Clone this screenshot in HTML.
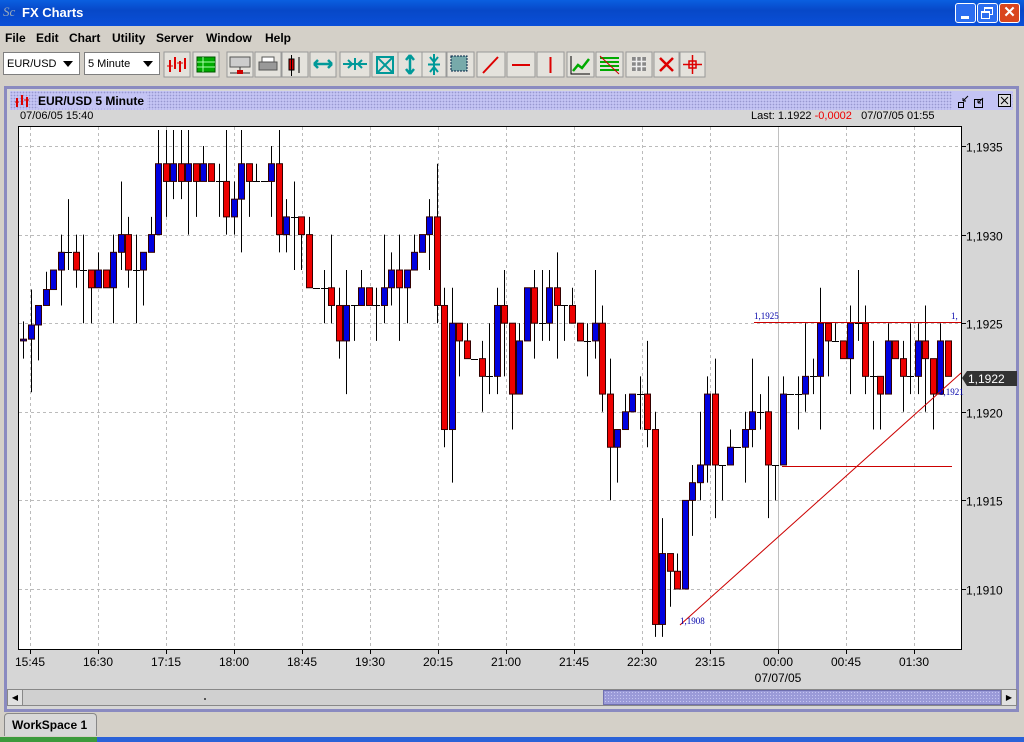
<!DOCTYPE html>
<html><head><meta charset="utf-8">
<style>
*{margin:0;padding:0;box-sizing:border-box}
body{width:1024px;height:742px;overflow:hidden;background:#d4d0c8;font-family:"Liberation Sans",sans-serif;position:relative}
.abs{position:absolute}
#title{left:0;top:0;width:1024px;height:26px;background:linear-gradient(#0a5fe0,#0748c8 40%,#0a4fd8);color:#fff;font-weight:bold;font-size:13px}
#menu{top:26px;left:0;width:1024px;height:23px;font-size:12px;font-weight:bold}
#menu span{position:absolute;top:5px}
.combo{position:absolute;top:52px;height:23px;background:#fff;border:1px solid #7f7f7f;font-size:11px;padding:5px 3px}
.combo:after{content:"";position:absolute;right:6px;top:8px;border:5px solid transparent;border-top:6px solid #000}
#frame{left:4px;top:86px;width:1015px;height:626px;border:3px solid #8a8ac0;background:#d6d6d6}
#ftitle{left:3px;top:2px;width:1003px;height:19px;background-color:#c4c4f4;background-image:radial-gradient(#9898d0 0.7px,transparent 0.9px);background-size:3px 3px;font-size:12px;font-weight:bold}
.sb{border:1px solid #888}
</style></head><body>
<div id="title" class="abs"><span class="abs" style="left:3px;top:4px;font-family:'Liberation Serif',serif;font-style:italic;color:#9ab;font-weight:normal;font-size:13px">Sc</span><span class="abs" style="left:22px;top:5px">FX Charts</span>
<div class="abs" style="left:955px;top:3px;width:21px;height:20px;background:#2b6ef0;border:1px solid #fff;border-radius:3px"><div class="abs" style="left:5px;top:12px;width:8px;height:3px;background:#fff"></div></div>
<div class="abs" style="left:977px;top:3px;width:21px;height:20px;background:#2b6ef0;border:1px solid #fff;border-radius:3px"><div class="abs" style="left:6px;top:3px;width:9px;height:8px;border:1px solid #fff;border-top-width:2px"></div><div class="abs" style="left:3px;top:7px;width:9px;height:8px;border:1px solid #fff;border-top-width:2px;background:#2b6ef0"></div></div>
<div class="abs" style="left:999px;top:3px;width:21px;height:20px;background:#d9461e;border:1px solid #fff;border-radius:3px;text-align:center;font-size:15px;line-height:18px">✕</div>
</div>
<div id="menu" class="abs"><span style="left:5px">File</span><span style="left:36px">Edit</span><span style="left:69px">Chart</span><span style="left:112px">Utility</span><span style="left:156px">Server</span><span style="left:206px">Window</span><span style="left:265px">Help</span></div>
<div class="combo" style="left:3px;width:77px">EUR/USD</div>
<div class="combo" style="left:84px;width:76px">5 Minute</div>
<svg class="abs" style="left:0;top:0" width="720" height="80">
<g fill="none" stroke-width="2">
<g transform="translate(164,52)"><rect width="26" height="25" fill="#e4e2dc" stroke="#999" stroke-width="1"/><path d="M6 8v12M11 5v12M16 9v11M21 6v11" stroke="#d00"/><path d="M3 14h6M13 11h6" stroke="#d00" stroke-width="1"/></g>
<g transform="translate(193,52)"><rect width="26" height="25" fill="#e4e2dc" stroke="#999" stroke-width="1"/><rect x="4" y="5" width="18" height="15" fill="#0a0" stroke="#050" stroke-width="1"/><path d="M4 10h18M4 15h18M10 5v15" stroke="#afa" stroke-width="1"/></g>
<g transform="translate(227,52)"><rect width="26" height="25" fill="#e4e2dc" stroke="#999" stroke-width="1"/><rect x="3" y="5" width="20" height="10" fill="#ccc" stroke="#555" stroke-width="1"/><path d="M13 15v6M3 21h20" stroke="#333" stroke-width="1"/><rect x="10" y="18" width="6" height="4" fill="#c00"/></g>
<g transform="translate(255,52)"><rect width="26" height="25" fill="#e4e2dc" stroke="#999" stroke-width="1"/><rect x="4" y="10" width="18" height="8" fill="#999" stroke="#555" stroke-width="1"/><rect x="7" y="5" width="12" height="5" fill="#fff" stroke="#555" stroke-width="1"/></g>
<g transform="translate(282,52)"><rect width="26" height="25" fill="#e4e2dc" stroke="#999" stroke-width="1"/><rect x="7" y="7" width="5" height="11" fill="#d00" stroke="#000" stroke-width="1"/><path d="M9.5 3v21M17 5v16" stroke="#000" stroke-width="1"/></g>
<g transform="translate(310,52)"><rect width="26" height="25" fill="#e4e2dc" stroke="#999" stroke-width="1"/><path d="M4 12h18M4 12l4-4M4 12l4 4M22 12l-4-4M22 12l-4 4" stroke="#099" stroke-width="2.5"/></g>
<g transform="translate(340,52)"><rect width="30" height="25" fill="#e4e2dc" stroke="#999" stroke-width="1"/><path d="M3 12h24M12 12l-4-4M12 12l-4 4M18 12l4-4M18 12l4 4M15 6v12" stroke="#099" stroke-width="2"/></g>
<g transform="translate(372,52)"><rect width="26" height="25" fill="#e4e2dc" stroke="#999" stroke-width="1"/><path d="M5 5l16 16M21 5L5 21M5 5h16v16H5z" stroke="#099" stroke-width="2"/></g>
<g transform="translate(398,52)"><rect width="24" height="25" fill="#e4e2dc" stroke="#999" stroke-width="1"/><path d="M12 3v19M12 3l-4 5M12 3l4 5M12 22l-4-5M12 22l4-5" stroke="#099" stroke-width="2.5"/></g>
<g transform="translate(422,52)"><rect width="24" height="25" fill="#e4e2dc" stroke="#999" stroke-width="1"/><path d="M12 2v21M12 10l-4-5M12 10l4-5M12 15l-4 5M12 15l4 5M6 12.5h12" stroke="#099" stroke-width="2"/></g>
<g transform="translate(447,52)"><rect width="27" height="25" fill="#e4e2dc" stroke="#999" stroke-width="1"/><rect x="4" y="4" width="16" height="15" fill="#7aa" stroke="#024" stroke-width="1" stroke-dasharray="2 1"/></g>
<g transform="translate(477,52)"><rect width="28" height="25" fill="#e4e2dc" stroke="#999" stroke-width="1"/><path d="M6 21L21 5" stroke="#d00"/></g>
<g transform="translate(507,52)"><rect width="28" height="25" fill="#e4e2dc" stroke="#999" stroke-width="1"/><path d="M5 13h18" stroke="#d00"/></g>
<g transform="translate(537,52)"><rect width="27" height="25" fill="#e4e2dc" stroke="#999" stroke-width="1"/><path d="M13.5 5v16" stroke="#d00"/></g>
<g transform="translate(567,52)"><rect width="27" height="25" fill="#e4e2dc" stroke="#999" stroke-width="1"/><path d="M4 4v18h19" stroke="#000" stroke-width="1"/><path d="M6 19l5-6 4 3 7-9" stroke="#0a0" stroke-width="2.5"/></g>
<g transform="translate(596,52)"><rect width="27" height="25" fill="#e4e2dc" stroke="#999" stroke-width="1"/><path d="M4 6h19M4 10h19M4 14h19M4 18h19" stroke="#0a0" stroke-width="2"/><path d="M4 4l19 18" stroke="#c00" stroke-width="1"/></g>
<g transform="translate(626,52)"><rect width="26" height="25" fill="#e4e2dc" stroke="#999" stroke-width="1"/><rect x="6" y="5" width="14" height="14" fill="#888"/><path d="M10.5 5v14M15.5 5v14M6 9.5h14M6 14.5h14" stroke="#eee" stroke-width="1.5"/></g>
<g transform="translate(654,52)"><rect width="25" height="25" fill="#e4e2dc" stroke="#999" stroke-width="1"/><path d="M6 6l13 13M19 6L6 19" stroke="#d00" stroke-width="2.5"/></g>
<g transform="translate(680,52)"><rect width="25" height="25" fill="#e4e2dc" stroke="#999" stroke-width="1"/><path d="M12.5 3v19M3 12.5h19" stroke="#d00" stroke-width="1.5"/><rect x="9" y="9" width="7" height="7" stroke="#d00" stroke-width="1.5"/></g>
</g></svg>
<div id="frame" class="abs">
<div id="ftitle" class="abs"><svg class="abs" style="left:4px;top:2px" width="18" height="15"><path d="M3 5v9M8 2v10M13 4v10" stroke="#d00" stroke-width="2"/><path d="M1 9h4M10 7h5" stroke="#d00"/></svg><span class="abs" style="left:28px;top:3px;background:#c4c4f4;padding-right:3px">EUR/USD 5 Minute</span>
<div class="abs" style="left:942px;top:0;width:60px;height:19px;background:#c4c4f4"></div>
<svg class="abs" style="left:946px;top:2px" width="56" height="16"><g stroke="#000" fill="none"><rect x="2.5" y="9.5" width="5" height="5"/><path d="M7 8l5-5M7 8h3M7 8v-3"/><rect x="18.5" y="6.5" width="8" height="8"/><path d="M22 10l5-5M22 10h3M22 10v-3"/><rect x="42.5" y="1.5" width="12" height="12" fill="#ddd"/><path d="M45 4l7 7M52 4l-7 7"/></g></svg>
</div>
</div>
<div class="abs" style="left:20px;top:110px;font-size:11px">07/06/05 15:40</div>
<div class="abs" style="left:751px;top:110px;font-size:11px">Last: 1.1922 <span style="color:#e00">-0,0002</span>&nbsp;&nbsp; 07/07/05 01:55</div>
<svg id="ch" class="abs" style="left:0;top:0" width="1024" height="742"></svg>
<div class="abs" style="left:7px;top:689px;width:1010px;height:17px;background:#d0d0d0;border:1px solid #888"></div>
<div class="abs sb" style="left:7px;top:689px;width:16px;height:17px;background:#e0e0e0;font-size:8px;text-align:center;line-height:15px">◀</div>
<div class="abs" style="left:603px;top:690px;width:398px;height:15px;background-color:#9a9ad8;background-image:radial-gradient(#c4c4f0 0.6px,transparent 0.8px);background-size:3px 3px;border:1px solid #7070b0"></div>
<div class="abs sb" style="left:1001px;top:689px;width:16px;height:17px;background:#e0e0e0;font-size:8px;text-align:center;line-height:15px">▶</div>
<div class="abs" style="left:204px;top:698px;width:2px;height:2px;background:#555"></div>
<div class="abs" style="left:4px;top:713px;width:93px;height:23px;border:1px solid #888;border-bottom:none;border-radius:4px 4px 0 0;background:#d8d8d8;font-size:12px;font-weight:bold;padding:4px 7px">WorkSpace 1</div>
<div class="abs" style="left:0;top:737px;width:1024px;height:5px;background:#2a62d8"></div>
<div class="abs" style="left:0;top:737px;width:97px;height:5px;background:#3c9a3c"></div>
<script>
var C=[24.1,24.9,26.0,26.9,28.0,29.0,29.0,28.0,28.0,27.0,28.0,27.0,29.0,30.0,28.0,28.0,29.0,30.0,34.0,33.0,34.0,33.0,34.0,33.0,34.0,33.0,33.0,31.0,32.0,34.0,33.0,33.0,33.0,34.0,30.0,31.0,31.0,30.0,27.0,27.0,27.0,26.0,24.0,26.0,26.0,27.0,26.0,26.0,27.0,28.0,27.0,28.0,29.0,30.0,31.0,26.0,19.0,25.0,24.0,23.0,23.0,22.0,22.0,26.0,25.0,21.0,24.0,27.0,25.0,25.0,27.0,26.0,26.0,25.0,24.0,24.0,25.0,21.0,18.0,19.0,20.0,21.0,21.0,19.0,8.0,12.0,11.0,10.0,15.0,16.0,17.0,21.0,17.0,17.0,18.0,18.0,19.0,20.0,20.0,17.0,17.0,21.0,21.0,21.0,22.0,22.0,25.0,24.0,24.0,23.0,25.0,25.0,22.0,22.0,21.0,24.0,23.0,22.0,22.0,24.0,23.0,21.0,24.0,22.0];
var n=C.length,s='',Y=function(p){return 146+(35-p)*17.72},dx=925/(n-1);
s+='<rect x="18.5" y="126.5" width="943" height="523" fill="#fff" stroke="#000"/>';
var lx=[30,98,166,234,302,370,438,506,574,642,710,778,846,914],lb=['15:45','16:30','17:15','18:00','18:45','19:30','20:15','21:00','21:45','22:30','23:15','00:00','00:45','01:30'];
lx.forEach(function(x,i){s+='<line x1="'+(x+.5)+'" y1="127" x2="'+(x+.5)+'" y2="649" stroke="'+(i==11?'#c0c0c0':'#bbb')+'" '+(i==11?'':'stroke-dasharray="3 3"')+'/>';s+='<line x1="'+(x+.5)+'" y1="649" x2="'+(x+.5)+'" y2="654" stroke="#000"/><text x="'+x+'" y="666" font-size="12" text-anchor="middle" fill="#000">'+lb[i]+'</text>';});
s+='<text x="778" y="682" font-size="12" text-anchor="middle">07/07/05</text>';
[35,30,25,20,15,10].forEach(function(p){var y=Math.round(Y(p))+.5;s+='<line x1="19" y1="'+y+'" x2="961" y2="'+y+'" stroke="#bbb" stroke-dasharray="3 3"/><line x1="961" y1="'+y+'" x2="966" y2="'+y+'" stroke="#000"/><text x="966" y="'+(y+5)+'" font-size="12">1,19'+p+'</text>';});
var o=24.0;
for(var i=0;i<n;i++){var x=Math.round(23+i*dx),c=C[i],hi=Math.max(o,c),lo=Math.min(o,c);var k=(i*37)%7;hi+=[1,0,2,1,0,3,1][k];lo-=[1,2,0,1,3,0,2][(i*11)%7];
if(i==84)lo=7.3;if(i>=18&&i<=22)hi=36;hi=Math.min(hi,35.9);lo=Math.max(lo,7.3);
s+='<line x1="'+(x+.5)+'" y1="'+Y(hi)+'" x2="'+(x+.5)+'" y2="'+Y(lo)+'" stroke="#000"/>';
if(Math.abs(c-o)<0.01){s+='<line x1="'+(x-3)+'" y1="'+(Math.round(Y(c))+.5)+'" x2="'+(x+4)+'" y2="'+(Math.round(Y(c))+.5)+'" stroke="#000"/>';}
else s+='<rect x="'+(x-2.5)+'" y="'+Y(Math.max(o,c))+'" width="6" height="'+(Math.abs(c-o)*17.72)+'" fill="'+(c>o?'#0000e0':'#ee0000')+'" stroke="#300"/>';
o=c;}
s+='<line x1="754" y1="322.5" x2="961" y2="322.5" stroke="#c00"/><text x="754" y="319" font-size="9" fill="#00a" font-family="Liberation Serif">1,1925</text><text x="951" y="319" font-size="9" fill="#00a" font-family="Liberation Serif">1,</text>';
s+='<line x1="782" y1="466.5" x2="952" y2="466.5" stroke="#c00"/>';
s+='<line x1="680" y1="625" x2="961" y2="373" stroke="#c00"/><text x="680" y="624" font-size="9" fill="#00a" font-family="Liberation Serif">1,1908</text><text x="939" y="395" font-size="9" fill="#00a" font-family="Liberation Serif">1,1921</text>';
s+='<path d="M962 378l5-7h50v15h-50z" fill="#333"/><text x="968" y="383" font-size="12" fill="#fff">1,1922</text>';
document.getElementById('ch').innerHTML=s;
</script>
</body></html>
